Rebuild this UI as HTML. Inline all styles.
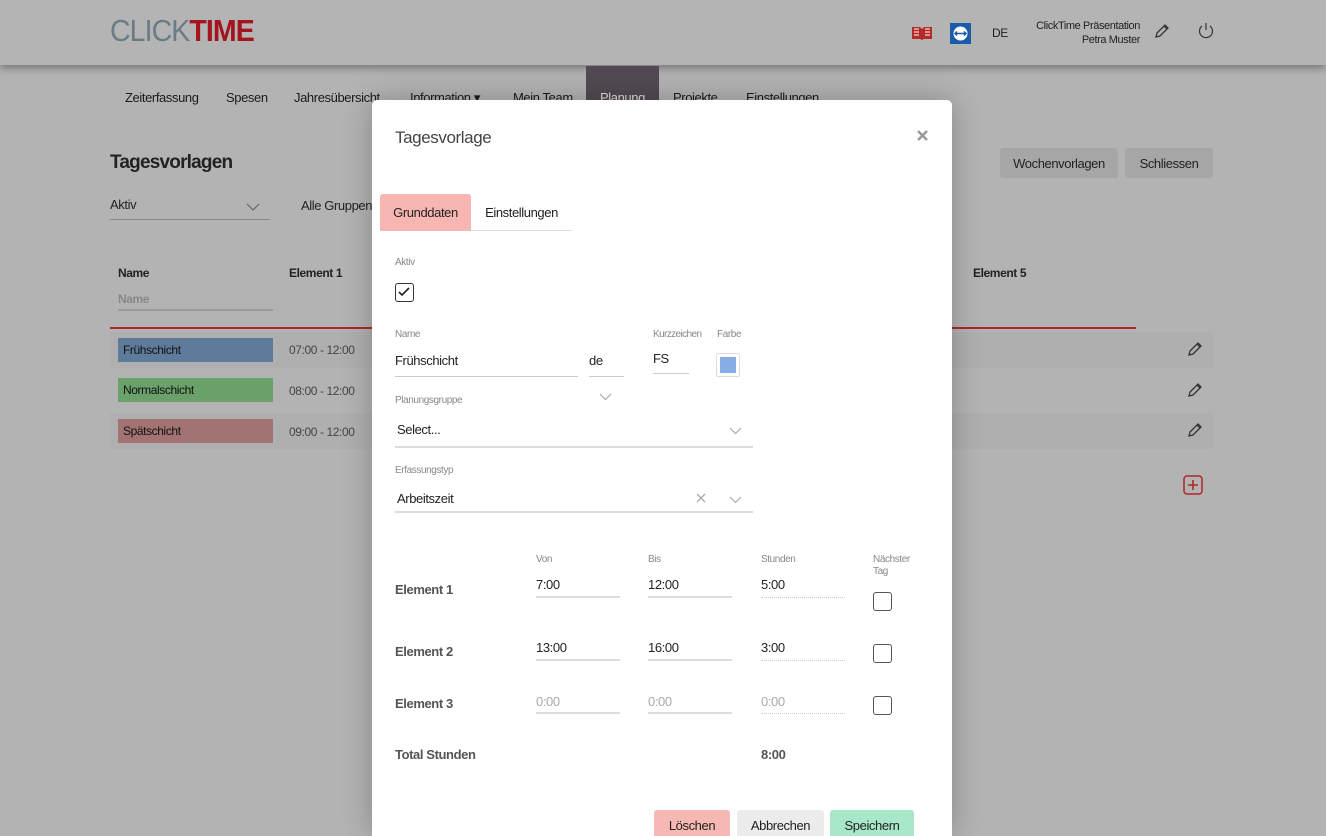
<!DOCTYPE html>
<html><head><meta charset="utf-8"><style>
*{margin:0;padding:0;box-sizing:border-box}
html,body{width:1326px;height:836px;overflow:hidden}
body{background:#b3b3b3;font-family:"Liberation Sans Narrow","Liberation Sans",sans-serif;color:#222;position:relative;letter-spacing:-0.4px}
.a{position:absolute;white-space:nowrap}
.hdr{position:absolute;left:0;top:0;width:1326px;height:65px;background:#b4b4b4;box-shadow:0 3px 8px rgba(0,0,0,.35)}
.nav{font-size:13px;color:#1a1a1a;top:90px}
.modal{position:absolute;left:372px;top:100px;width:580px;height:736px;background:#fff;border-radius:5px 5px 0 0;box-shadow:0 0 30px rgba(0,0,0,.25);overflow:hidden}
.lbl{font-size:10px;color:#888}
.ul{border-bottom:1px solid #ccc}
.cb{position:absolute;width:19px;height:19px;border:1.5px solid #555;border-radius:3px}
.btn{position:absolute;height:30px;border-radius:3px;font-size:13px;text-align:center;line-height:32px}
.row{position:absolute;left:110px;width:1103px;height:36px;background:#afafaf}
.tag{position:absolute;left:118px;width:155px;height:24px;font-size:12px;line-height:24px;padding-left:5px;color:#111}
.chev{position:absolute}
</style></head><body>
<div class="hdr"></div>
<div class="a" style="left:110px;top:13px;font-size:31px;letter-spacing:-1px;transform:scaleX(0.92);transform-origin:left"><span style="color:#6a7b85">CLICK</span><span style="color:#a3141c;font-weight:bold">TIME</span></div>
<svg class="a" style="left:911px;top:25px" width="22" height="16" viewBox="0 0 22 16"><path d="M1 2h8l2 2 2-2h8v12h-8l-2 1-2-1H1z" fill="#b32a26"/><path d="M3 4h5M3 7h5M3 10h5M14 4h5M14 7h5M14 10h5" stroke="#fff" stroke-width="1"/></svg>
<svg class="a" style="left:950px;top:23px" width="21" height="21"><rect width="21" height="21" fill="#1b5bab"/><circle cx="10.5" cy="10.5" r="7" fill="#fff"/><path d="M5 10.5h11M7 8.5l-2 2 2 2M14 8.5l2 2-2 2" stroke="#1b5bab" stroke-width="1.5" fill="none"/></svg>
<div class="a" style="left:992px;top:26px;font-size:12px">DE</div>
<div class="a" style="left:1000px;top:19px;width:140px;text-align:right;font-size:11px;line-height:14px">ClickTime Präsentation<br>Petra Muster</div>
<svg class="a" style="left:1154px;top:23px" width="16" height="16" viewBox="0 0 16 16"><path d="M2 14l1-4 8-8 3 3-8 8z M10 3l3 3" stroke="#333" fill="none" stroke-width="1.3"/></svg>
<svg class="a" style="left:1197px;top:22px" width="18" height="18" viewBox="0 0 18 18"><path d="M5 4a6.5 6.5 0 1 0 8 0M9 1v7" stroke="#333" fill="none" stroke-width="1.2"/></svg>

<div class="a" style="left:586px;top:66px;width:73px;height:50px;background:#524a52"></div>
<div class="a nav" style="left:125px">Zeiterfassung</div>
<div class="a nav" style="left:226px">Spesen</div>
<div class="a nav" style="left:294px">Jahresübersicht</div>
<div class="a nav" style="left:410px">Information ▾</div>
<div class="a nav" style="left:513px">Mein Team</div>
<div class="a nav" style="left:600px;color:#ddd">Planung</div>
<div class="a nav" style="left:673px">Projekte</div>
<div class="a nav" style="left:746px">Einstellungen</div>

<div class="a" style="left:110px;top:152px;font-size:19px;font-weight:bold;letter-spacing:-0.8px">Tagesvorlagen</div>
<div class="btn" style="left:1000px;top:148px;width:118px;background:#a6a6a6">Wochenvorlagen</div>
<div class="btn" style="left:1125px;top:148px;width:88px;background:#a6a6a6">Schliessen</div>
<div class="a ul" style="left:110px;top:197px;width:160px;height:23px;font-size:13px;border-color:#888">Aktiv</div>
<svg class="chev" style="left:246px;top:203px" width="14" height="8"><path d="M1 1l6 6 6-6" stroke="#666" fill="none" stroke-width="1.2"/></svg>
<div class="a" style="left:301px;top:198px;font-size:13px">Alle Gruppen</div>
<div class="a" style="left:118px;top:266px;font-size:12px;font-weight:bold">Name</div>
<div class="a" style="left:289px;top:266px;font-size:12px;font-weight:bold">Element 1</div>
<div class="a" style="left:973px;top:266px;font-size:12px;font-weight:bold">Element 5</div>
<div class="a" style="left:118px;top:292px;width:155px;height:19px;font-size:12px;font-weight:bold;color:#888;border-bottom:2px solid #999">Name</div>
<div class="a" style="left:110px;top:327px;width:1026px;height:2px;background:#b0262c"></div>
<div class="row" style="top:332px"></div>
<div class="row" style="top:413px"></div>
<div class="tag" style="top:338px;background:#5f7b9c">Frühschicht</div>
<div class="tag" style="top:378px;background:#6aa16b">Normalschicht</div>
<div class="tag" style="top:419px;background:#a37272">Spätschicht</div>
<div class="a" style="left:289px;top:343px;font-size:12px;color:#444">07:00 - 12:00</div>
<div class="a" style="left:289px;top:384px;font-size:12px;color:#444">08:00 - 12:00</div>
<div class="a" style="left:289px;top:425px;font-size:12px;color:#444">09:00 - 12:00</div>
<svg class="a" style="left:1187px;top:341px" width="16" height="16" viewBox="0 0 16 16"><path d="M2 14l1-4 8-8 3 3-8 8z M10 3l3 3" stroke="#333" fill="none" stroke-width="1.3"/></svg>
<svg class="a" style="left:1187px;top:382px" width="16" height="16" viewBox="0 0 16 16"><path d="M2 14l1-4 8-8 3 3-8 8z M10 3l3 3" stroke="#333" fill="none" stroke-width="1.3"/></svg>
<svg class="a" style="left:1187px;top:422px" width="16" height="16" viewBox="0 0 16 16"><path d="M2 14l1-4 8-8 3 3-8 8z M10 3l3 3" stroke="#333" fill="none" stroke-width="1.3"/></svg>
<svg class="a" style="left:1183px;top:475px" width="20" height="20"><rect x="1" y="1" width="18" height="18" rx="3" fill="none" stroke="#b0262c" stroke-width="1.5"/><path d="M10 5v10M5 10h10" stroke="#b0262c" stroke-width="1.6"/></svg>

<div class="modal">
<div class="a" style="left:23px;top:28px;font-size:17px;color:#444">Tagesvorlage</div>
<svg class="a" style="left:545px;top:30px" width="11" height="11"><path d="M1 1l9 9M10 1l-9 9" stroke="#999" stroke-width="2.5"/></svg>
<div class="a" style="left:8px;top:94px;width:91px;height:37px;background:#f8b6b2;border-radius:3px 3px 0 0;font-size:13px;line-height:37px;text-align:center">Grunddaten</div>
<div class="a" style="left:99px;top:94px;width:101px;height:37px;border-bottom:1px solid #ddd;font-size:13px;line-height:37px;text-align:center">Einstellungen</div>
<div class="a lbl" style="left:23px;top:157px">Aktiv</div>
<div class="cb" style="left:23px;top:183px;border-color:#333"><svg width="16" height="16" style="position:absolute;left:0;top:0"><path d="M3 8l3 3 7-7" stroke="#222" stroke-width="1.6" fill="none"/></svg></div>
<div class="a lbl" style="left:23px;top:229px">Name</div>
<div class="a lbl" style="left:281px;top:229px;letter-spacing:-0.6px">Kurzzeichen</div>
<div class="a lbl" style="left:345px;top:229px">Farbe</div>
<div class="a ul" style="left:23px;top:253px;width:183px;height:24px;font-size:13px">Frühschicht</div>
<div class="a ul" style="left:217px;top:253px;width:35px;height:24px;font-size:13px">de</div>
<div class="a ul" style="left:281px;top:251px;width:36px;height:23px;font-size:13px">FS</div>
<div class="a" style="left:344px;top:253px;width:24px;height:24px;border:1px solid #ddd;border-radius:2px"><div style="margin:3px;width:16px;height:16px;background:#87aee4"></div></div>
<svg class="chev" style="left:227px;top:293px" width="13" height="8"><path d="M1 1l5.5 5.5 5.5-5.5" stroke="#aaa" fill="none" stroke-width="1.2"/></svg>
<div class="a lbl" style="left:23px;top:295px">Planungsgruppe</div>
<div class="a" style="left:23px;top:318px;width:358px;height:30px;border-bottom:2px solid #ddd;font-size:13px;padding-left:2px;line-height:24px">Select...</div>
<svg class="chev" style="left:357px;top:327px" width="13" height="8"><path d="M1 1l5.5 5.5 5.5-5.5" stroke="#aaa" fill="none" stroke-width="1.2"/></svg>
<div class="a lbl" style="left:23px;top:365px">Erfassungstyp</div>
<div class="a" style="left:23px;top:388px;width:358px;height:25px;border-bottom:2px solid #ddd;font-size:13px;padding-left:2px;line-height:22px">Arbeitszeit</div>
<svg class="chev" style="left:324px;top:393px" width="10" height="10"><path d="M1 1l8 8M9 1l-8 8" stroke="#aaa" stroke-width="1.3"/></svg>
<svg class="chev" style="left:357px;top:396px" width="13" height="8"><path d="M1 1l5.5 5.5 5.5-5.5" stroke="#aaa" fill="none" stroke-width="1.2"/></svg>

<div class="a lbl" style="left:164px;top:454px">Von</div>
<div class="a lbl" style="left:276px;top:454px">Bis</div>
<div class="a lbl" style="left:389px;top:454px">Stunden</div>
<div class="a lbl" style="left:501px;top:454px;line-height:12px">Nächster<br>Tag</div>
<div class="a" style="left:23px;top:482px;font-size:13px;font-weight:bold;color:#555">Element 1</div>
<div class="a" style="left:23px;top:544px;font-size:13px;font-weight:bold;color:#555">Element 2</div>
<div class="a" style="left:23px;top:596px;font-size:13px;font-weight:bold;color:#555">Element 3</div>
<div class="a" style="left:23px;top:647px;font-size:13px;font-weight:bold;color:#555">Total Stunden</div>
<div class="a" style="left:389px;top:647px;font-size:13px;font-weight:bold;color:#555">8:00</div>

<div class="a" style="left:164px;top:477px;width:84px;height:21px;border-bottom:2px solid #ddd;font-size:13px">7:00</div>
<div class="a" style="left:276px;top:477px;width:84px;height:21px;border-bottom:2px solid #ddd;font-size:13px">12:00</div>
<div class="a" style="left:389px;top:477px;width:84px;height:21px;border-bottom:1px dotted #ccc;font-size:13px">5:00</div>
<div class="cb" style="left:501px;top:492px"></div>
<div class="a" style="left:164px;top:540px;width:84px;height:21px;border-bottom:2px solid #ddd;font-size:13px">13:00</div>
<div class="a" style="left:276px;top:540px;width:84px;height:21px;border-bottom:2px solid #ddd;font-size:13px">16:00</div>
<div class="a" style="left:389px;top:540px;width:84px;height:21px;border-bottom:1px dotted #ccc;font-size:13px">3:00</div>
<div class="cb" style="left:501px;top:544px"></div>
<div class="a" style="left:164px;top:594px;width:84px;height:20px;border-bottom:2px solid #ddd;font-size:13px;color:#aaa">0:00</div>
<div class="a" style="left:276px;top:594px;width:84px;height:20px;border-bottom:2px solid #ddd;font-size:13px;color:#aaa">0:00</div>
<div class="a" style="left:389px;top:594px;width:84px;height:20px;border-bottom:1px dotted #ccc;font-size:13px;color:#aaa">0:00</div>
<div class="cb" style="left:501px;top:596px"></div>

<div class="btn" style="left:282px;top:710px;width:76px;background:#f6b8b2">Löschen</div>
<div class="btn" style="left:365px;top:710px;width:87px;background:#ececec">Abbrechen</div>
<div class="btn" style="left:458px;top:710px;width:84px;background:#a8e8c8">Speichern</div>
</div>
</body></html>
